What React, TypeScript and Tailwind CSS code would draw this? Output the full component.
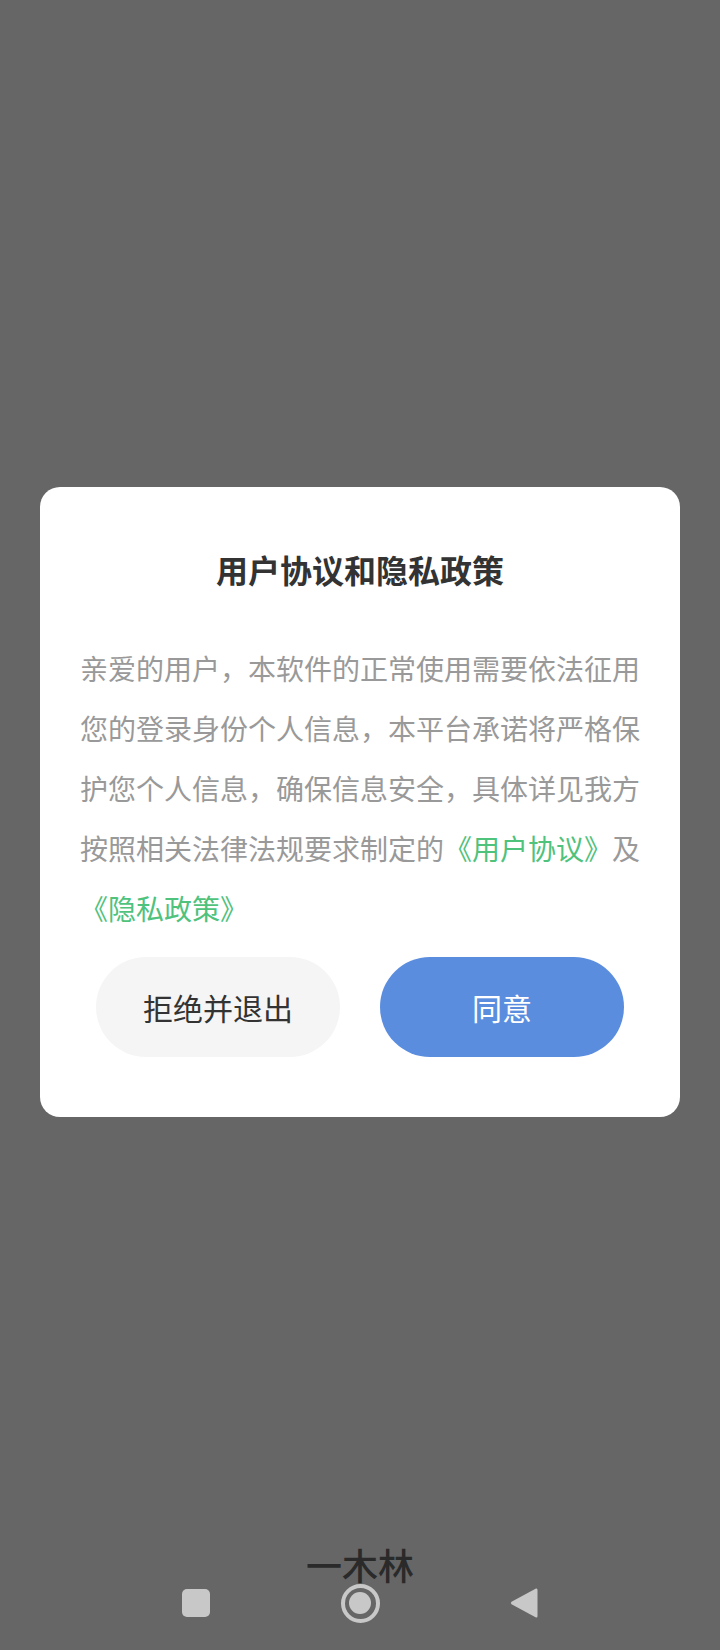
import React from "react";

const FONT = { fontFamily: '"Noto Sans CJK SC", "Noto Sans", sans-serif' };

const LINES = [
  "亲爱的用户，本软件的正常使用需要依法征用",
  "您的登录身份个人信息，本平台承诺将严格保",
  "护您个人信息，确保信息安全，具体详见我方",
];

function NavBar() {
  return (
    <div className="absolute bottom-0 left-0 right-0 flex h-[94px] items-center justify-center gap-[124px]">
      <div className="flex w-10 items-center justify-center">
        <div className="h-[28px] w-[28px] rounded-[5px] bg-[#c8c8c8]" />
      </div>
      <div className="flex w-10 items-center justify-center">
        <div className="flex h-[39px] w-[39px] items-center justify-center rounded-full border-[4px] border-[#c8c8c8]">
          <div className="h-[22px] w-[22px] rounded-full bg-[#c8c8c8]" />
        </div>
      </div>
      <div className="flex w-10 items-center justify-center">
        <svg width="28" height="32" viewBox="0 0 28 32">
          <path d="M26 1.5 Q27.5 1 27.5 3 V29 Q27.5 31 26 30.5 L1.5 17.2 Q0 16 1.5 14.8 Z" fill="#c8c8c8" />
        </svg>
      </div>
    </div>
  );
}

export default function App() {
  return (
    <div className="relative flex min-h-[1650px] w-full flex-col items-center bg-[#666666] pt-[487px]" style={FONT}>
      <div className="flex w-[640px] flex-col items-center rounded-[20px] bg-white px-[40px] pt-[60px] pb-[60px]">
        <h2 className="text-[32px] leading-[45px] font-bold text-[#333333]">用户协议和隐私政策</h2>
        <div className="mt-[46px] w-[560px] text-[28px] leading-[60px] whitespace-nowrap text-[#999999]">
          {LINES.map((line) => (
            <div key={line}>{line}</div>
          ))}
          <div className="flex justify-between">
            <span>
              按照相关法律法规要求制定的<span className="text-[#4fc27c]">《用户协议》</span>
            </span>
            <span>及</span>
          </div>
          <div className="text-[#4fc27c]">《隐私政策》</div>
        </div>
        <div className="mt-[19px] flex gap-[40px]">
          <button className="h-[100px] w-[244px] rounded-full bg-[#f5f5f5] text-[30px] text-[#333333]">
            拒绝并退出
          </button>
          <button className="h-[100px] w-[244px] rounded-full bg-[#5b8ddf] text-[30px] text-white">
            同意
          </button>
        </div>
      </div>
      <div className="mt-[426px] text-[36px] leading-[43px] font-medium text-[#2a2a2a]">一木林</div>
      <NavBar />
    </div>
  );
}
